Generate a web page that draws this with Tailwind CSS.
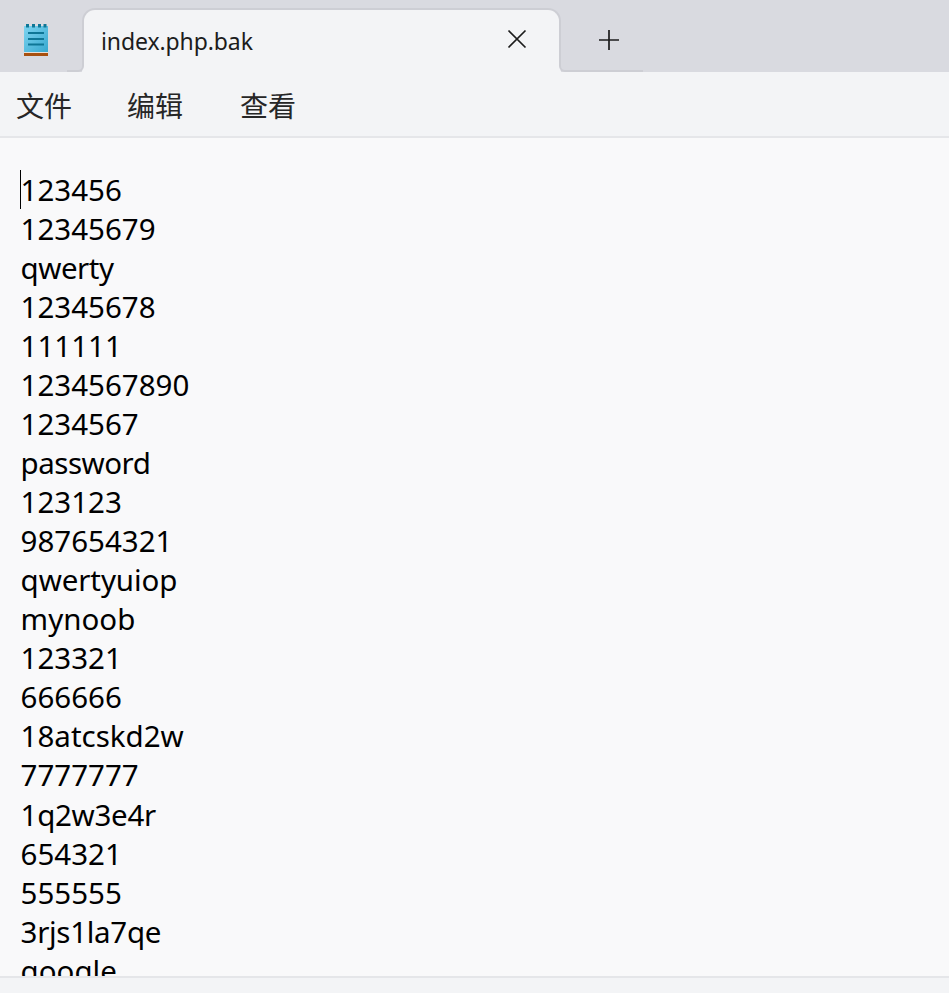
<!DOCTYPE html>
<html lang="zh"><head><meta charset="utf-8">
<script src="https://cdn.jsdelivr.net/npm/@tailwindcss/browser@4"></script>
</head>
<body class="m-0 bg-[#f9f9fa]">
<div class="w-[949px] h-[993px] overflow-hidden flex flex-col font-['Noto_Sans','Noto_Sans_CJK_SC',sans-serif] bg-[#f9f9fa]">
  <header class="h-[72px] shrink-0 flex bg-[#d9dae0] pt-2">
    <div class="w-[67px] shrink-0 relative">
      <svg class="absolute left-[23px] top-[16px]" width="26" height="32" viewBox="0 0 26 32">
        <defs><linearGradient id="g" x1="0" y1="0" x2="1" y2="1"><stop offset="0" stop-color="#7ed4f0"/><stop offset="1" stop-color="#37a8cf"/></linearGradient></defs>
        <rect x="1" y="2" width="24" height="26" fill="url(#g)"/>
        <rect x="1" y="28" width="24" height="1" fill="#e6e0d8"/>
        <rect x="1" y="29" width="24" height="3" fill="#a8500f"/>
        <path d="M3 0h3v3.500h-3zM9 0h3v3.500h-3zM15 0h3v3.500h-3zM20.500 0h3v3.500h-3z" fill="#0e7696"/>
        <path d="M5 8h16v2h-16zM5 14h16v2h-16zM5 19.500h16v2h-16z" fill="#0e7696"/>
      </svg>
    </div>
    <div class="w-[17px] -mr-[2px] h-16 shrink-0 flex items-end relative z-10">
      <div class="w-[17px] h-[17px] rounded-br-[6px] border-b-2 border-r-2 border-[#cdced4]"></div>
    </div>
    <div class="w-[479px] h-16 shrink-0 flex flex-col">
      <div class="h-[58px] bg-[#f3f4f6] border-t-2 border-x-2 border-[#cdced4] rounded-t-[13px] flex items-center">
        <span class="ml-[17px] text-[23px] leading-none text-[#1c1c1c] w-[407px] mt-[6px] tracking-[-0.1px]">index.php.bak</span>
        <svg width="20" height="20" viewBox="0 0 20 20" class="-ml-[1px] mt-[2px]"><path d="M1.500 1.500l17 17M18.500 1.500l-17 17" stroke="#1c1c1c" stroke-width="1.700" fill="none"/></svg>
      </div>
      <div class="h-[6px] bg-[#f3f4f6]"></div>
    </div>
    <div class="w-[84px] -ml-[2px] h-16 shrink-0 flex flex-col relative z-10">
      <div class="h-[47px]">
        <svg width="20" height="20" viewBox="0 0 20 20" class="ml-[40px] mt-[22px]"><path d="M10 0v20M0 10h20" stroke="#1c1c1c" stroke-width="1.700" fill="none"/></svg>
      </div>
      <div class="h-[17px] rounded-bl-[6px] border-b-2 border-l-2 border-[#cdced4]"></div>
    </div>
    <div class="flex-1"></div>
  </header>
  <nav class="h-[66px] shrink-0 bg-[#f3f4f6] border-b-2 border-[#e5e6e9] flex items-center pl-[16px] gap-[56px] text-[28px] leading-none text-[#262626]">
    <span class="mt-[4px]">文件</span><span class="mt-[4px] -ml-[1px] mr-[1px]">编辑</span><span class="mt-[4px]">查看</span>
  </nav>
  <main class="h-[838px] shrink-0 relative overflow-hidden bg-[#f9f9fa] pl-[20.600px] pt-[32px] text-[29.500px] leading-[39.030px] text-black">
    <div class="absolute left-[20px] top-[32px] w-px h-[39px] bg-black"></div>
    <div>123456</div>
    <div>12345679</div>
    <div class="tracking-[-0.5px]">qwerty</div>
    <div>12345678</div>
    <div>111111</div>
    <div>1234567890</div>
    <div>1234567</div>
    <div class="tracking-[-0.5px]">password</div>
    <div>123123</div>
    <div>987654321</div>
    <div class="tracking-[-0.1px]">qwertyuiop</div>
    <div>mynoob</div>
    <div>123321</div>
    <div>666666</div>
    <div>18atcskd2w</div>
    <div>7777777</div>
    <div class="tracking-[-0.3px]">1q2w3e4r</div>
    <div>654321</div>
    <div>555555</div>
    <div class="tracking-[-0.3px]">3rjs1la7qe</div>
    <div>google</div>
  </main>
  <footer class="flex-1 bg-[#f3f4f6] border-t-2 border-[#e5e6e9]"></footer>
</div>
</body></html>
